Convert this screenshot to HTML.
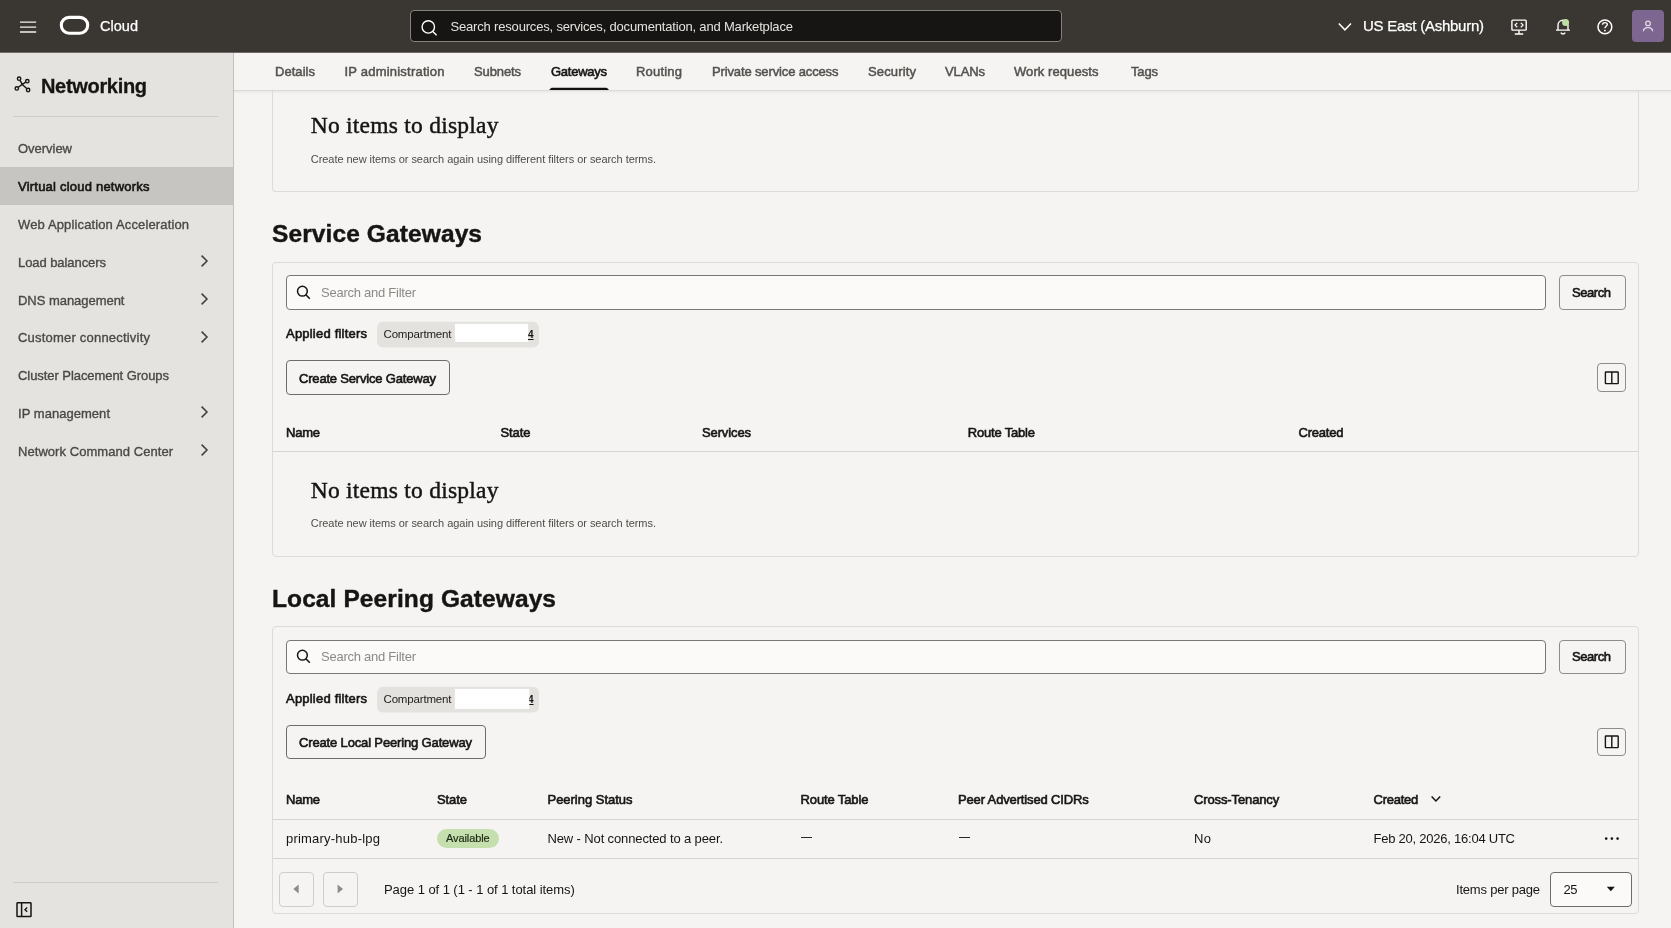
<!DOCTYPE html>
<html lang="en"><head><meta charset="utf-8"><title>Gateways - Virtual cloud networks - Networking | Cloud</title>
<style>
html,body{margin:0;padding:0;}
body{width:1671px;height:928px;overflow:hidden;position:relative;background:#f5f4f2;font-family:"Liberation Sans",sans-serif;color:#161513;}
.b{position:absolute;box-sizing:border-box;}
#tx{position:absolute;left:0;top:0;width:1671px;height:928px;will-change:transform;}
.t{position:absolute;white-space:pre;line-height:20px;height:20px;}
svg{position:absolute;overflow:visible;}
</style></head><body>
<div class="b" style="left:0px;top:0px;width:1671px;height:52.5px;background:#3a3632;height:53px;"></div>
<div class="b" style="left:0px;top:52px;width:1671px;height:1px;background:#6f6c68;"></div>
<svg style="left:19px;top:20px" width="18" height="14" viewBox="19 20 18 14"><path d="M20 22.2H36.2M20 27.1H36.2M20 32H36.2" stroke="#f4f2f0" stroke-width="1.3" fill="none"/></svg>
<svg style="left:58px;top:14px" width="34" height="24" viewBox="58 14 34 24"><rect x="61.3" y="17.4" width="26.4" height="15.8" rx="7.9" fill="none" stroke="#fff" stroke-width="3.1"/></svg>
<div class="b" style="left:410px;top:10px;width:652px;height:32px;background:#161513;border:1px solid #85817c;border-radius:4px;"></div>
<svg style="left:419px;top:18px" width="20" height="20" viewBox="419 18 20 20"><circle cx="428.3" cy="26.9" r="6.2" fill="none" stroke="#fff" stroke-width="1.4"/><path d="M432.8 31.4L436.6 35.2" stroke="#fff" stroke-width="1.4" fill="none"/></svg>
<svg style="left:1336px;top:20px" width="18" height="14" viewBox="1336 20 18 14"><path d="M1338.8 23.4L1344.9 29.8L1351 23.4" stroke="#fff" stroke-width="1.5" fill="none"/></svg>
<svg style="left:1509px;top:17px" width="20" height="20" viewBox="1509 17 20 20"><g fill="none" stroke="#fff" stroke-width="1.4"><rect x="1511.9" y="20.1" width="14.3" height="10" rx="0.8"/><path d="M1519 30.2V33.8M1514.8 34H1523.2"/><path d="M1517.3 22.9L1515 25.1L1517.3 27.3M1520.8 22.9L1523.1 25.1L1520.8 27.3" stroke-width="1.2"/></g></svg>
<svg style="left:1553px;top:17px" width="20" height="20" viewBox="1553 17 20 20"><g fill="none" stroke="#fff" stroke-width="1.4"><path d="M1556 30.1H1570M1558 30V25.4C1558 22.4 1560.2 20.3 1563 20.3C1565.8 20.3 1568 22.4 1568 25.4V30"/><path d="M1560.8 32.6C1561.4 33.6 1562.1 34 1563 34C1563.9 34 1564.6 33.6 1565.2 32.6"/></g><circle cx="1565.6" cy="22.4" r="3.5" fill="#bfe0a5"/></svg>
<svg style="left:1595px;top:17px" width="20" height="20" viewBox="1595 17 20 20"><circle cx="1604.9" cy="26.9" r="6.9" fill="none" stroke="#fff" stroke-width="1.5"/><path d="M1602.5 24.8C1602.5 23.4 1603.5 22.6 1604.9 22.6C1606.3 22.6 1607.3 23.4 1607.3 24.6C1607.3 26.2 1604.9 26.4 1604.9 28.2" fill="none" stroke="#fff" stroke-width="1.4"/><circle cx="1604.9" cy="30.6" r="0.9" fill="#fff"/></svg>
<div class="b" style="left:1632px;top:10px;width:32px;height:32px;background:#7d6690;border-radius:4px;"></div>
<svg style="left:1640px;top:18px" width="16" height="16" viewBox="1640 18 16 16"><g fill="none" stroke="#e2d9e6" stroke-width="1.3"><circle cx="1648" cy="23.4" r="2.3"/><path d="M1643.4 31.2C1643.4 28.9 1645.4 27.6 1648 27.6C1650.6 27.6 1652.6 28.9 1652.6 31.2"/></g></svg>
<div class="b" style="left:0px;top:53px;width:233px;height:875px;background:#e5e3df;"></div>
<div class="b" style="left:233px;top:53px;width:1px;height:875px;background:#c2c0bc;"></div>
<svg style="left:12px;top:74px" width="22" height="22" viewBox="12 74 22 22"><g fill="none" stroke="#161513" stroke-width="1.4"><path d="M22.3 84.4L20 80.3M22.3 84.4L25.7 82.2M22.3 84.4L18.3 87.2M22.3 84.4L26.7 88.6"/><circle cx="19.1" cy="78.7" r="1.7"/><circle cx="27.3" cy="81.2" r="1.7"/><circle cx="16.8" cy="88.4" r="1.7"/><circle cx="28.1" cy="90" r="1.7"/></g></svg>
<div class="b" style="left:13px;top:116px;width:204.5px;height:1px;background:#cfcdc9;"></div>
<div class="b" style="left:0px;top:167px;width:233px;height:37.75px;background:#c7c5c1;"></div>
<svg style="left:198px;top:253.40px" width="14" height="16" viewBox="0 0 14 16"><path d="M3.6 2.6L9 8L3.6 13.4" fill="none" stroke="#3f3d3a" stroke-width="1.5"/></svg>
<svg style="left:198px;top:291.40px" width="14" height="16" viewBox="0 0 14 16"><path d="M3.6 2.6L9 8L3.6 13.4" fill="none" stroke="#3f3d3a" stroke-width="1.5"/></svg>
<svg style="left:198px;top:328.90px" width="14" height="16" viewBox="0 0 14 16"><path d="M3.6 2.6L9 8L3.6 13.4" fill="none" stroke="#3f3d3a" stroke-width="1.5"/></svg>
<svg style="left:198px;top:404.40px" width="14" height="16" viewBox="0 0 14 16"><path d="M3.6 2.6L9 8L3.6 13.4" fill="none" stroke="#3f3d3a" stroke-width="1.5"/></svg>
<svg style="left:198px;top:442.40px" width="14" height="16" viewBox="0 0 14 16"><path d="M3.6 2.6L9 8L3.6 13.4" fill="none" stroke="#3f3d3a" stroke-width="1.5"/></svg>
<div class="b" style="left:13px;top:882px;width:204.5px;height:1px;background:#cfcdc9;"></div>
<svg style="left:14px;top:900px" width="20" height="20" viewBox="14 900 20 20"><g fill="none" stroke="#161513" stroke-width="1.5"><rect x="17" y="902.8" width="14" height="13.8" rx="0.6"/><path d="M21.6 902.8V916.6"/><path d="M27.2 907.6L25 909.7L27.2 911.8" stroke-width="1.4"/></g></svg>
<div class="b" style="left:234px;top:53px;width:1437px;height:37px;background:#f5f4f2;"></div>
<div class="b" style="left:234px;top:90px;width:1437px;height:1px;background:#dcdad6;"></div>
<div class="b" style="left:234px;top:91px;width:1437px;height:3px;background:linear-gradient(#eae8e5,#f5f4f2);"></div>
<svg style="left:548px;top:85px" width="64" height="6" viewBox="548 85 64 6"><path d="M549.2 90.1L550.6 88.4Q551.2 87.8 552 87.8H606.2Q607 87.8 607.6 88.4L609 90.1Z" fill="#100f0e"/></svg>
<div class="b" style="left:272px;top:94px;width:1367px;height:98px;border:1px solid #dddbd7;border-top:none;border-radius:0 0 4px 4px;"></div>
<div class="b" style="left:272px;top:91px;width:1px;height:4px;background:#dddbd7;"></div>
<div class="b" style="left:1638px;top:91px;width:1px;height:4px;background:#dddbd7;"></div>
<div class="b" style="left:272px;top:262px;width:1367px;height:295px;border:1px solid #dddbd7;border-radius:4px;"></div>
<div class="b" style="left:286px;top:275px;width:1259.5px;height:34.5px;background:#fbfaf9;border:1px solid #7a7773;border-radius:4px;"></div>
<svg style="left:295px;top:284.1px" width="18" height="18" viewBox="0 0 18 18"><circle cx="7.4" cy="7.2" r="4.9" fill="none" stroke="#161513" stroke-width="1.5"/><path d="M10.9 10.8L14.8 14.8" stroke="#161513" stroke-width="1.6" fill="none"/></svg>
<div class="b" style="left:1559px;top:275px;width:66.5px;height:34.5px;border:1px solid #8f8c88;border-radius:4px;"></div>
<svg style="left:377px;top:320px" width="162" height="30" viewBox="377 320 162 30"><rect x="377" y="321.80" width="162" height="25.6" rx="6" fill="#e4e2de"/></svg>
<svg style="left:450px;top:321px" width="84" height="26" viewBox="450 321 84 26"><rect x="454.9" y="323.9" width="73.3" height="18" fill="#fff"/></svg>
<div class="b" style="left:286px;top:360px;width:164px;height:34.5px;border:1px solid #6f6c68;border-radius:4px;"></div>
<div class="b" style="left:1597px;top:363px;width:28.5px;height:28.5px;border:1px solid #8f8c88;border-radius:4px;"></div>
<svg style="left:1603px;top:368.6px" width="18" height="18" viewBox="0 0 18 18"><g fill="none" stroke="#161513" stroke-width="1.4"><rect x="2.4" y="3" width="12.8" height="11.6" rx="0.5"/><path d="M8.8 3V14.6"/></g></svg>
<div class="b" style="left:273px;top:451px;width:1365px;height:1px;background:#d6d4d0;"></div>
<div class="b" style="left:272px;top:626.5px;width:1367px;height:287.5px;border:1px solid #dddbd7;border-radius:4px;top:626px;height:288px;"></div>
<div class="b" style="left:286px;top:639.6px;width:1259.5px;height:34.5px;background:#fbfaf9;border:1px solid #7a7773;border-radius:4px;"></div>
<svg style="left:295px;top:648.1px" width="18" height="18" viewBox="0 0 18 18"><circle cx="7.4" cy="7.2" r="4.9" fill="none" stroke="#161513" stroke-width="1.5"/><path d="M10.9 10.8L14.8 14.8" stroke="#161513" stroke-width="1.6" fill="none"/></svg>
<div class="b" style="left:1559px;top:639.6px;width:66.5px;height:34.5px;border:1px solid #8f8c88;border-radius:4px;"></div>
<svg style="left:377px;top:684px" width="162" height="30" viewBox="377 684 162 30"><rect x="377" y="686.80" width="162" height="25.6" rx="6" fill="#e4e2de"/></svg>
<div class="b" style="left:286px;top:724.6px;width:199.5px;height:34.5px;border:1px solid #6f6c68;border-radius:4px;"></div>
<div class="b" style="left:1597px;top:727.6px;width:28.5px;height:28.5px;border:1px solid #8f8c88;border-radius:4px;"></div>
<svg style="left:1603px;top:733.2px" width="18" height="18" viewBox="0 0 18 18"><g fill="none" stroke="#161513" stroke-width="1.4"><rect x="2.4" y="3" width="12.8" height="11.6" rx="0.5"/><path d="M8.8 3V14.6"/></g></svg>
<svg style="left:1428px;top:792px" width="16" height="14" viewBox="1428 792 16 14"><path d="M1431.6 796.4L1435.9 800.9L1440.2 796.4" fill="none" stroke="#161513" stroke-width="1.5"/></svg>
<div class="b" style="left:273px;top:819px;width:1365px;height:1px;background:#d6d4d0;"></div>
<div class="b" style="left:437px;top:829px;width:61.75px;height:18.75px;background:#c5e0ae;border-radius:10px;"></div>
<div class="b" style="left:800.5px;top:836.6px;width:11.25px;height:1.2px;background:#2a2825;height:1.2px;"></div>
<div class="b" style="left:958.5px;top:836.6px;width:11.5px;height:1.2px;background:#2a2825;height:1.2px;"></div>
<svg style="left:1603px;top:835px" width="18" height="8" viewBox="1603 835 18 8"><g fill="#161513"><circle cx="1606.2" cy="838.6" r="1.3"/><circle cx="1611.9" cy="838.6" r="1.3"/><circle cx="1617.6" cy="838.6" r="1.3"/></g></svg>
<div class="b" style="left:273px;top:858px;width:1365px;height:1px;background:#d6d4d0;"></div>
<div class="b" style="left:279px;top:872px;width:34.5px;height:34.5px;border:1px solid #cfcdc9;border-radius:4px;"></div>
<div class="b" style="left:323px;top:872px;width:34.5px;height:34.5px;border:1px solid #cfcdc9;border-radius:4px;"></div>
<svg style="left:290px;top:882px" width="12" height="14" viewBox="0 0 12 14"><path d="M8.7 2.4V11.6L3.3 7Z" fill="#8f8c88"/></svg>
<svg style="left:334px;top:882px" width="12" height="14" viewBox="0 0 12 14"><path d="M3.6 2.4V11.6L9 7Z" fill="#8f8c88"/></svg>
<div class="b" style="left:1550px;top:872px;width:81.5px;height:34.5px;background:#fbfaf9;border:1px solid #6f6c68;border-radius:4px;"></div>
<svg style="left:1604px;top:884px" width="14" height="10" viewBox="1604 884 14 10"><path d="M1606.8 886.8H1614.8L1610.8 891.2Z" fill="#161513"/></svg>
<div id="tx">
<span class="t" id="t0" style="left:100px;top:16.00px;font-size:14.5px;color:#ffffff;-webkit-text-stroke:0.25px #ffffff;letter-spacing:0.027px;">Cloud</span>
<span class="t" id="t1" style="left:450.5px;top:17.00px;font-size:13px;color:#e4e2df;letter-spacing:-0.178px;">Search resources, services, documentation, and Marketplace</span>
<span class="t" id="t2" style="left:1363px;top:16.00px;font-size:15px;color:#ffffff;-webkit-text-stroke:0.25px #ffffff;letter-spacing:-0.253px;">US East (Ashburn)</span>
<span class="t" id="t3" style="left:41px;top:76.00px;font-size:20px;color:#161513;font-weight:700;-webkit-text-stroke:0.3px #161513;letter-spacing:-0.323px;">Networking</span>
<span class="t" id="t4" style="left:18px;top:139.00px;font-size:13px;color:#4b4945;-webkit-text-stroke:0.35px #4b4945;letter-spacing:-0.027px;">Overview</span>
<span class="t" id="t5" style="left:18px;top:177.00px;font-size:13px;color:#161513;-webkit-text-stroke:0.6px #161513;letter-spacing:0.217px;">Virtual cloud networks</span>
<span class="t" id="t6" style="left:18px;top:215.00px;font-size:13px;color:#4b4945;-webkit-text-stroke:0.35px #4b4945;letter-spacing:0.133px;">Web Application Acceleration</span>
<span class="t" id="t7" style="left:18px;top:253.00px;font-size:13px;color:#4b4945;-webkit-text-stroke:0.35px #4b4945;letter-spacing:-0.070px;">Load balancers</span>
<span class="t" id="t8" style="left:18px;top:291.00px;font-size:13px;color:#4b4945;-webkit-text-stroke:0.35px #4b4945;letter-spacing:-0.035px;">DNS management</span>
<span class="t" id="t9" style="left:18px;top:328.00px;font-size:13px;color:#4b4945;-webkit-text-stroke:0.35px #4b4945;letter-spacing:0.205px;">Customer connectivity</span>
<span class="t" id="t10" style="left:18px;top:366.00px;font-size:13px;color:#4b4945;-webkit-text-stroke:0.35px #4b4945;letter-spacing:-0.063px;">Cluster Placement Groups</span>
<span class="t" id="t11" style="left:18px;top:404.00px;font-size:13px;color:#4b4945;-webkit-text-stroke:0.35px #4b4945;letter-spacing:0.038px;">IP management</span>
<span class="t" id="t12" style="left:18px;top:442.00px;font-size:13px;color:#4b4945;-webkit-text-stroke:0.35px #4b4945;letter-spacing:0.053px;">Network Command Center</span>
<span class="t" id="t13" style="left:275px;top:62.00px;font-size:13px;color:#55524e;-webkit-text-stroke:0.5px #55524e;letter-spacing:0.042px;">Details</span>
<span class="t" id="t14" style="left:344.5px;top:62.00px;font-size:13px;color:#55524e;-webkit-text-stroke:0.5px #55524e;letter-spacing:0.213px;">IP administration</span>
<span class="t" id="t15" style="left:474px;top:62.00px;font-size:13px;color:#55524e;-webkit-text-stroke:0.5px #55524e;letter-spacing:-0.117px;">Subnets</span>
<span class="t" id="t16" style="left:551px;top:62.00px;font-size:13px;color:#161513;-webkit-text-stroke:0.6px #161513;letter-spacing:-0.259px;">Gateways</span>
<span class="t" id="t17" style="left:636px;top:62.00px;font-size:13px;color:#55524e;-webkit-text-stroke:0.5px #55524e;letter-spacing:0.198px;">Routing</span>
<span class="t" id="t18" style="left:712px;top:62.00px;font-size:13px;color:#55524e;-webkit-text-stroke:0.5px #55524e;letter-spacing:-0.135px;">Private service access</span>
<span class="t" id="t19" style="left:868px;top:62.00px;font-size:13px;color:#55524e;-webkit-text-stroke:0.5px #55524e;letter-spacing:0.147px;">Security</span>
<span class="t" id="t20" style="left:945px;top:62.00px;font-size:13px;color:#55524e;-webkit-text-stroke:0.5px #55524e;letter-spacing:-0.117px;">VLANs</span>
<span class="t" id="t21" style="left:1014px;top:62.00px;font-size:13px;color:#55524e;-webkit-text-stroke:0.5px #55524e;letter-spacing:0.077px;">Work requests</span>
<span class="t" id="t22" style="left:1131px;top:62.00px;font-size:13px;color:#55524e;-webkit-text-stroke:0.5px #55524e;letter-spacing:-0.156px;">Tags</span>
<span class="t" id="t23" style="left:310.75px;top:115.00px;font-size:23.5px;color:#161513;font-family:'Liberation Serif', serif;-webkit-text-stroke:0.45px #161513;letter-spacing:0.240px;">No items to display</span>
<span class="t" id="t24" style="left:310.75px;top:149.00px;font-size:11px;color:#4f4c48;letter-spacing:-0.042px;">Create new items or search again using different filters or search terms.</span>
<span class="t" id="t25" style="left:272px;top:224.00px;font-size:24.5px;color:#161513;font-weight:700;-webkit-text-stroke:0.4px #161513;letter-spacing:0.106px;">Service Gateways</span>
<span class="t" id="t26" style="left:321px;top:283.00px;font-size:13px;color:#8d8a86;letter-spacing:-0.250px;">Search and Filter</span>
<span class="t" id="t27" style="left:1572px;top:283.00px;font-size:13px;color:#161513;-webkit-text-stroke:0.6px #161513;letter-spacing:-0.441px;">Search</span>
<span class="t" id="t28" style="left:286px;top:324.00px;font-size:13px;color:#161513;-webkit-text-stroke:0.6px #161513;letter-spacing:0.211px;">Applied filters</span>
<span class="t" id="t29" style="left:383.5px;top:324.00px;font-size:11.5px;color:#23211f;letter-spacing:-0.167px;">Compartment</span>
<span class="t" id="t30" style="left:528px;top:325.00px;font-size:10px;color:#161513;font-weight:700;text-decoration:underline;">4</span>
<span class="t" id="t31" style="left:299px;top:369.00px;font-size:13px;color:#161513;-webkit-text-stroke:0.6px #161513;letter-spacing:-0.186px;">Create Service Gateway</span>
<span class="t" id="t32" style="left:286px;top:423.00px;font-size:13px;color:#161513;-webkit-text-stroke:0.6px #161513;letter-spacing:-0.229px;">Name</span>
<span class="t" id="t33" style="left:500.5px;top:423.00px;font-size:13px;color:#161513;-webkit-text-stroke:0.6px #161513;letter-spacing:-0.090px;">State</span>
<span class="t" id="t34" style="left:702px;top:423.00px;font-size:13px;color:#161513;-webkit-text-stroke:0.6px #161513;letter-spacing:-0.123px;">Services</span>
<span class="t" id="t35" style="left:967.75px;top:423.00px;font-size:13px;color:#161513;-webkit-text-stroke:0.6px #161513;letter-spacing:-0.191px;">Route Table</span>
<span class="t" id="t36" style="left:1298.5px;top:423.00px;font-size:13px;color:#161513;-webkit-text-stroke:0.6px #161513;letter-spacing:-0.208px;">Created</span>
<span class="t" id="t37" style="left:310.75px;top:480.00px;font-size:23.5px;color:#161513;font-family:'Liberation Serif', serif;-webkit-text-stroke:0.45px #161513;letter-spacing:0.240px;">No items to display</span>
<span class="t" id="t38" style="left:310.75px;top:513.00px;font-size:11px;color:#4f4c48;letter-spacing:-0.042px;">Create new items or search again using different filters or search terms.</span>
<span class="t" id="t39" style="left:272px;top:589.00px;font-size:24.5px;color:#161513;font-weight:700;-webkit-text-stroke:0.4px #161513;letter-spacing:0.101px;">Local Peering Gateways</span>
<span class="t" id="t40" style="left:321px;top:647.00px;font-size:13px;color:#8d8a86;letter-spacing:-0.250px;">Search and Filter</span>
<span class="t" id="t41" style="left:1572px;top:647.00px;font-size:13px;color:#161513;-webkit-text-stroke:0.6px #161513;letter-spacing:-0.441px;">Search</span>
<span class="t" id="t42" style="left:286px;top:689.00px;font-size:13px;color:#161513;-webkit-text-stroke:0.6px #161513;letter-spacing:0.211px;">Applied filters</span>
<span class="t" id="t43" style="left:383.5px;top:689.00px;font-size:11.5px;color:#23211f;letter-spacing:-0.167px;">Compartment</span>
<span class="t" id="t44" style="left:528px;top:690.00px;font-size:10px;color:#161513;font-weight:700;text-decoration:underline;">4</span>
<span class="t" id="t45" style="left:299px;top:733.00px;font-size:13px;color:#161513;-webkit-text-stroke:0.6px #161513;letter-spacing:-0.150px;">Create Local Peering Gateway</span>
<span class="t" id="t46" style="left:286px;top:790.00px;font-size:13px;color:#161513;-webkit-text-stroke:0.6px #161513;letter-spacing:-0.229px;">Name</span>
<span class="t" id="t47" style="left:437px;top:790.00px;font-size:13px;color:#161513;-webkit-text-stroke:0.6px #161513;letter-spacing:-0.090px;">State</span>
<span class="t" id="t48" style="left:547.5px;top:790.00px;font-size:13px;color:#161513;-webkit-text-stroke:0.6px #161513;letter-spacing:-0.022px;">Peering Status</span>
<span class="t" id="t49" style="left:800.5px;top:790.00px;font-size:13px;color:#161513;-webkit-text-stroke:0.6px #161513;letter-spacing:-0.116px;">Route Table</span>
<span class="t" id="t50" style="left:958px;top:790.00px;font-size:13px;color:#161513;-webkit-text-stroke:0.6px #161513;letter-spacing:-0.146px;">Peer Advertised CIDRs</span>
<span class="t" id="t51" style="left:1194px;top:790.00px;font-size:13px;color:#161513;-webkit-text-stroke:0.6px #161513;letter-spacing:-0.121px;">Cross-Tenancy</span>
<span class="t" id="t52" style="left:1373.5px;top:790.00px;font-size:13px;color:#161513;-webkit-text-stroke:0.6px #161513;letter-spacing:-0.250px;">Created</span>
<span class="t" id="t53" style="left:286px;top:829.00px;font-size:13px;color:#161513;letter-spacing:0.211px;">primary-hub-lpg</span>
<span class="t" id="t54" style="left:446px;top:828.00px;font-size:11px;color:#1f2a14;-webkit-text-stroke:0.2px #1f2a14;letter-spacing:-0.088px;">Available</span>
<span class="t" id="t55" style="left:547.5px;top:829.00px;font-size:13px;color:#161513;letter-spacing:-0.128px;">New - Not connected to a peer.</span>
<span class="t" id="t56" style="left:1194px;top:829.00px;font-size:13px;color:#161513;letter-spacing:0.375px;">No</span>
<span class="t" id="t57" style="left:1373.5px;top:829.00px;font-size:13px;color:#161513;letter-spacing:-0.237px;">Feb 20, 2026, 16:04 UTC</span>
<span class="t" id="t58" style="left:384px;top:880.00px;font-size:13px;color:#161513;letter-spacing:-0.062px;">Page 1 of 1 (1 - 1 of 1 total items)</span>
<span class="t" id="t59" style="left:1456px;top:880.00px;font-size:13px;color:#161513;letter-spacing:-0.209px;">Items per page</span>
<span class="t" id="t60" style="left:1563.5px;top:880.00px;font-size:13px;color:#161513;letter-spacing:-0.469px;">25</span>
<svg style="left:450px;top:686px" width="84" height="26" viewBox="450 686 84 26"><rect x="454.9" y="688.9" width="74.4" height="20" fill="#fff"/></svg>
</div>
</body></html>
